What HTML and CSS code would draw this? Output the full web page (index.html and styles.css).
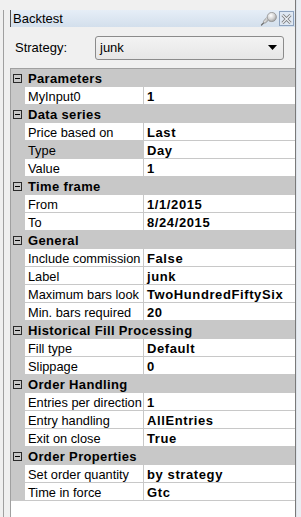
FILE: index.html
```html
<!DOCTYPE html>
<html lang="en">
<head>
    <meta charset="UTF-8">
    <title>Backtest</title>
    <link rel="stylesheet" href="styles.css">
</head>
<body>
    <div class="window">
        <div class="side"></div>

        <div class="pane">
            <!-- Title bar -->
            <div class="titlebar">
                <span class="title">Backtest</span>
                <span class="tools">
                    <svg class="pin" width="17" height="14" viewBox="0 0 17 14">
                        <defs>
                            <radialGradient id="ball" cx="0.4" cy="0.35" r="0.75">
                                <stop offset="0" stop-color="#ffffff"/>
                                <stop offset="0.55" stop-color="#d0d0d0"/>
                                <stop offset="1" stop-color="#8e8e8e"/>
                            </radialGradient>
                            <linearGradient id="shaft" x1="0" y1="0" x2="1" y2="1">
                                <stop offset="0" stop-color="#f4f4f4"/>
                                <stop offset="1" stop-color="#a8a8a8"/>
                            </linearGradient>
                        </defs>
                        <path d="M1.5 13 L5 9.5" stroke="#6e6e6e" stroke-width="1.3" stroke-linecap="round"/>
                        <ellipse cx="6.2" cy="8.3" rx="3.6" ry="1.6" transform="rotate(-45 6.2 8.3)" fill="url(#shaft)" stroke="#8a8a8a" stroke-width="0.7"/>
                        <path d="M6 6.5 L9.5 3.5 L13 7 L9.8 10 Z" fill="url(#shaft)"/>
                        <circle cx="11.8" cy="5" r="4.6" fill="url(#ball)" stroke="#8a8a8a" stroke-width="0.7"/>
                    </svg>
                    <span class="close">
                        <svg width="11" height="10" viewBox="0 0 11 10">
                            <path d="M1.5 1 L9.5 9 M9.5 1 L1.5 9" stroke="#7c7c7c" stroke-width="3"/>
                            <path d="M1.5 1 L9.5 9 M9.5 1 L1.5 9" stroke="#eef2f7" stroke-width="1.2"/>
                        </svg>
                    </span>
                </span>
            </div>

            <!-- Strategy picker -->
            <div class="strategy">
                <label for="strategy">Strategy:</label>
                <div class="combo" id="strategy">
                    <span>junk</span>
                    <svg width="9" height="5" viewBox="0 0 9 5"><path d="M0 0 H9 L4.5 5 Z" fill="#000"/></svg>
                </div>
            </div>

            <!-- Property grid -->
            <div class="grid">
                <div class="cat"><span class="gutter"><span class="toggle"></span></span><span class="cat-label">Parameters</span></div>
                <div class="prop"><span class="name">MyInput0</span><span class="value">1</span></div>

                <div class="cat"><span class="gutter"><span class="toggle"></span></span><span class="cat-label">Data series</span></div>
                <div class="prop"><span class="name">Price based on</span><span class="value">Last</span></div>
                <div class="prop selected"><span class="name">Type</span><span class="value">Day</span></div>
                <div class="prop"><span class="name">Value</span><span class="value">1</span></div>

                <div class="cat"><span class="gutter"><span class="toggle"></span></span><span class="cat-label">Time frame</span></div>
                <div class="prop"><span class="name">From</span><span class="value">1/1/2015</span></div>
                <div class="prop"><span class="name">To</span><span class="value">8/24/2015</span></div>

                <div class="cat"><span class="gutter"><span class="toggle"></span></span><span class="cat-label">General</span></div>
                <div class="prop"><span class="name">Include commission</span><span class="value">False</span></div>
                <div class="prop"><span class="name">Label</span><span class="value">junk</span></div>
                <div class="prop"><span class="name">Maximum bars look</span><span class="value">TwoHundredFiftySix</span></div>
                <div class="prop"><span class="name">Min. bars required</span><span class="value">20</span></div>

                <div class="cat"><span class="gutter"><span class="toggle"></span></span><span class="cat-label">Historical Fill Processing</span></div>
                <div class="prop"><span class="name">Fill type</span><span class="value">Default</span></div>
                <div class="prop"><span class="name">Slippage</span><span class="value">0</span></div>

                <div class="cat"><span class="gutter"><span class="toggle"></span></span><span class="cat-label">Order Handling</span></div>
                <div class="prop"><span class="name">Entries per direction</span><span class="value">1</span></div>
                <div class="prop"><span class="name">Entry handling</span><span class="value">AllEntries</span></div>
                <div class="prop"><span class="name">Exit on close</span><span class="value">True</span></div>

                <div class="cat"><span class="gutter"><span class="toggle"></span></span><span class="cat-label">Order Properties</span></div>
                <div class="prop"><span class="name">Set order quantity</span><span class="value">by strategy</span></div>
                <div class="prop"><span class="name">Time in force</span><span class="value">Gtc</span></div>
            </div>
        </div>

        <div class="trail"></div>
    </div>
</body>
</html>
```

FILE: styles.css
```css
/* General Styles */
body {
    margin: 0;
    padding: 0;
    background-color: #f0f0f0;
    font-family: 'Liberation Sans', Arial, sans-serif;
    color: #000;
    overflow: hidden;
}

.window {
    display: flex;
    height: 517px;
}

.side {
    width: 3px;
    margin-top: 10px;
    border-right: 1px solid #a0a0a0;
}

.pane {
    width: 285px;
    padding: 10px 0 0 6px;
    display: flex;
    flex-direction: column;
    border-right: 1px solid #7a7a7a;
}

.trail {
    flex: 1;
    background-color: #eaeef3;
    border-left: 1px solid #dde3ea;
}

/* Title bar */
.titlebar {
    height: 17px;
    display: flex;
    align-items: center;
    justify-content: space-between;
    padding-left: 2px;
    border-left: 1px solid #505050;
    background: linear-gradient(#e6eef7, #d3dfec);
    font-size: 13px;
}

.tools {
    display: flex;
    align-items: center;
    gap: 2px;
    padding-right: 1px;
}

.pin {
    display: block;
}

.close {
    width: 13px;
    height: 13px;
    display: flex;
    align-items: center;
    justify-content: center;
    border: 1px solid #8ea3bf;
    background-color: #dfe8f3;
}

/* Strategy picker */
.strategy {
    height: 41px;
    display: flex;
    align-items: center;
    font-size: 13px;
}

.strategy label {
    width: 80px;
    padding-left: 5px;
}

.combo {
    width: 189px;
    height: 24px;
    box-sizing: border-box;
    display: flex;
    align-items: center;
    justify-content: space-between;
    padding: 0 6px 0 4px;
    border: 1px solid #8b8b8b;
    border-radius: 3px;
    background: linear-gradient(#f3f3f3, #e6e6e6);
}

/* Property grid */
.grid {
    flex: 1;
    background-color: #fff;
    border-top: 1px solid #a0a0a0;
    border-left: 1px solid #a0a0a0;
    font-size: 12.8px;
}

.cat, .prop {
    display: flex;
    height: 18px;
    background-color: #c8c8c8;
}

.gutter {
    width: 14px;
    display: flex;
    align-items: center;
    padding-left: 2px;
    box-sizing: border-box;
}

.toggle {
    width: 9px;
    height: 9px;
    box-sizing: border-box;
    border: 1px solid #2a2a2a;
    background: linear-gradient(#000, #000) center / 5px 1px no-repeat;
}

.cat-label {
    padding: 2px 0 0 3px;
    line-height: 15px;
    font-size: 13px;
    font-weight: bold;
    letter-spacing: 0.35px;
    white-space: nowrap;
    overflow: hidden;
}

.prop {
    padding-left: 14px;
}

.name, .value {
    box-sizing: border-box;
    height: 18px;
    padding: 2px 0 0 3px;
    line-height: 15px;
    white-space: nowrap;
    overflow: hidden;
    background-color: #fff;
    border-bottom: 1px solid #c8c8c8;
}

.name {
    width: 119px;
    border-right: 1px solid #c8c8c8;
}

.value {
    flex: 1;
    font-size: 13px;
    font-weight: bold;
    letter-spacing: 0.6px;
}

.selected .name {
    background-color: #c8c8c8;
}
```
